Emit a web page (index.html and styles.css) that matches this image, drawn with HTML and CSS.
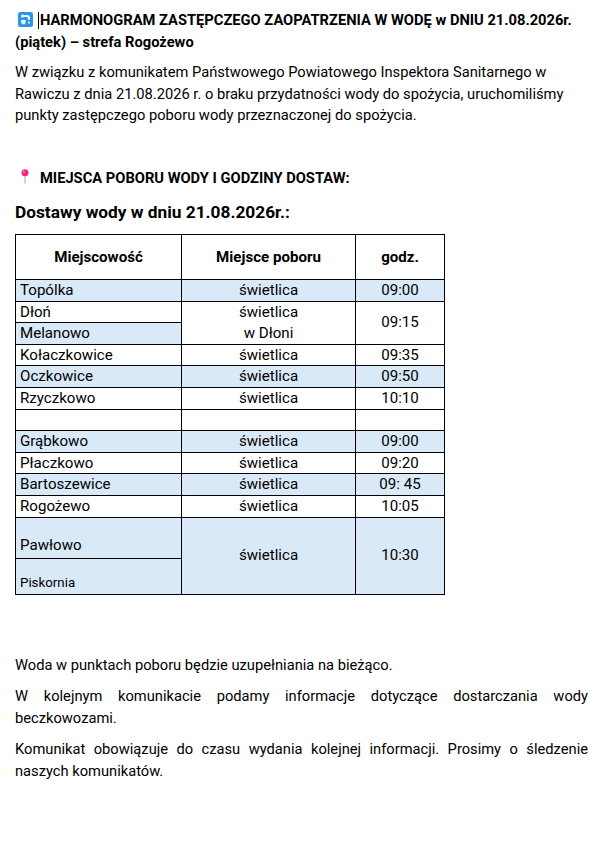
FILE: index.html
```html
<!DOCTYPE html>
<html lang="pl">
<head>
<meta charset="utf-8">
<title>Harmonogram</title>
<link rel="stylesheet" href="styles.css">
</head>
<body>
<div class="page">
  <h1 class="title"><span class="ico-water"><svg viewBox="0 0 16 16" width="15" height="15"><rect x="0" y="0" width="16" height="16" rx="2.5" fill="#2e94ea"/><path d="M5 3.2h4.2a3.6 3.6 0 0 1 3.6 3.6v1.4h-2.2V6.9a1.5 1.5 0 0 0-1.5-1.5H5z" fill="#fff"/><rect x="3.6" y="2.6" width="1.8" height="3.4" rx="0.6" fill="#fff"/><path d="M11.7 9.6c.6 1 .9 1.5.9 1.9a.9.9 0 0 1-1.8 0c0-.4.3-.9.9-1.9z" fill="#fff"/><path d="M3 8.5h5.5l-1 4.5h-3.5z" fill="#fff" opacity="0.95"/></svg></span><span class="caret"></span>HARMONOGRAM ZASTĘPCZEGO ZAOPATRZENIA W WODĘ w DNIU 21.08.2026r. (piątek) – strefa Rogożewo</h1>
  <p class="text">W związku z komunikatem Państwowego Powiatowego Inspektora Sanitarnego w<br>Rawiczu z dnia 21.08.2026 r. o braku przydatności wody do spożycia, uruchomiliśmy<br>punkty zastępczego poboru wody przeznaczonej do spożycia.</p>
  <p class="places"><span class="ico-pin"><svg viewBox="0 0 12 18" width="10" height="15"><line x1="6" y1="6" x2="6" y2="17" stroke="#b9b9b9" stroke-width="1.4" stroke-linecap="round"/><circle cx="6" cy="4.6" r="4.2" fill="#f4247a"/><circle cx="4.6" cy="3.3" r="1.2" fill="#ff9cc4"/></svg></span>MIEJSCA POBORU WODY I GODZINY DOSTAW:</p>
  <h2 class="subhead">Dostawy wody w dniu 21.08.2026r.:</h2>
  <table class="sched">
    <colgroup><col class="c1"><col class="c2"><col class="c3"></colgroup>
    <thead>
      <tr class="head"><th>Miejscowość</th><th>Miejsce poboru</th><th>godz.</th></tr>
    </thead>
    <tbody>
      <tr><td class="loc sh">Topólka</td><td class="sh">świetlica</td><td class="sh">09:00</td></tr>
      <tr><td class="loc">Dłoń</td><td rowspan="2">świetlica<br>w Dłoni</td><td rowspan="2">09:15</td></tr>
      <tr><td class="loc sh">Melanowo</td></tr>
      <tr><td class="loc">Kołaczkowice</td><td>świetlica</td><td>09:35</td></tr>
      <tr><td class="loc sh">Oczkowice</td><td class="sh">świetlica</td><td class="sh">09:50</td></tr>
      <tr><td class="loc">Rzyczkowo</td><td>świetlica</td><td>10:10</td></tr>
      <tr><td class="loc">&nbsp;</td><td></td><td></td></tr>
      <tr><td class="loc sh">Grąbkowo</td><td class="sh">świetlica</td><td class="sh">09:00</td></tr>
      <tr><td class="loc">Płaczkowo</td><td>świetlica</td><td>09:20</td></tr>
      <tr><td class="loc sh">Bartoszewice</td><td class="sh">świetlica</td><td class="sh">09: 45</td></tr>
      <tr><td class="loc">Rogożewo</td><td>świetlica</td><td>10:05</td></tr>
      <tr class="tall1"><td class="loc sh bot">Pawłowo</td><td class="sh" rowspan="2">świetlica</td><td class="sh" rowspan="2">10:30</td></tr>
      <tr class="tall2"><td class="loc sh bot small">Piskornia</td></tr>
    </tbody>
  </table>
  <p class="text first-after">Woda w punktach poboru będzie uzupełniania na bieżąco.</p>
  <p class="text just"><span class="jline">W kolejnym komunikacie podamy informacje dotyczące dostarczania wody</span>beczkowozami.</p>
  <p class="text just"><span class="jline">Komunikat obowiązuje do czasu wydania kolejnej informacji. Prosimy o śledzenie</span>naszych komunikatów.</p>
</div>
</body>
</html>
```
FILE: styles.css
```css
html, body {
  margin: 0;
  padding: 0;
  background: #ffffff;
}
.page {
  padding: 9px 19px 0 15px;
  font-family: Roboto, "Liberation Sans", sans-serif;
  color: #000000;
}
.title {
  margin: 0;
  font-size: 14.7px;
  font-weight: 700;
  line-height: 22px;
}
.ico-water {
  display: inline-block;
  width: 15px;
  height: 15px;
  margin: 0 5px 0 3px;
  vertical-align: -2px;
}
.ico-water svg, .ico-pin svg {
  display: block;
}
.caret {
  display: inline-block;
  width: 1px;
  height: 17px;
  background: #000;
  margin-right: 1px;
  vertical-align: -4px;
}
.text {
  margin: 9px 0 0 0;
  font-size: 14.7px;
  line-height: 21.5px;
}
.places {
  margin: 41px 0 0 0;
  font-size: 14.7px;
  line-height: 21.5px;
  font-weight: 700;
}
.ico-pin {
  display: inline-block;
  width: 10px;
  height: 15px;
  margin: 0 10px 0 5px;
  vertical-align: -1px;
}
.subhead {
  margin: 11px 0 0 0;
  font-size: 17.3px;
  line-height: 24px;
  font-weight: 700;
}
.sched {
  margin-top: 10px;
  border-collapse: collapse;
  width: 429px;
  table-layout: fixed;
  font-size: 15.1px;
}
.c1 { width: 166px; }
.c2 { width: 174px; }
.c3 { width: 89px; }
.sched th, .sched td {
  border: 1px solid #000;
  padding: 0;
  text-align: center;
  vertical-align: middle;
  line-height: 20.6px;
}
.sched th {
  height: 44px;
  font-weight: 700;
}
.sched td.loc {
  text-align: left;
  padding-left: 4px;
}
.sh {
  background: #dae9f7;
}
.tall1 td.bot {
  height: 38px;
  vertical-align: bottom;
  padding-bottom: 2px;
}
.tall2 td.bot {
  height: 35px;
  vertical-align: bottom;
  padding-bottom: 0;
}
.small {
  font-size: 13.3px;
}
.first-after {
  margin-top: 60px;
}
.just {
  margin-top: 10px;
  text-align: justify;
}
.jline {
  display: block;
  text-align: justify;
  text-align-last: justify;
}
```
